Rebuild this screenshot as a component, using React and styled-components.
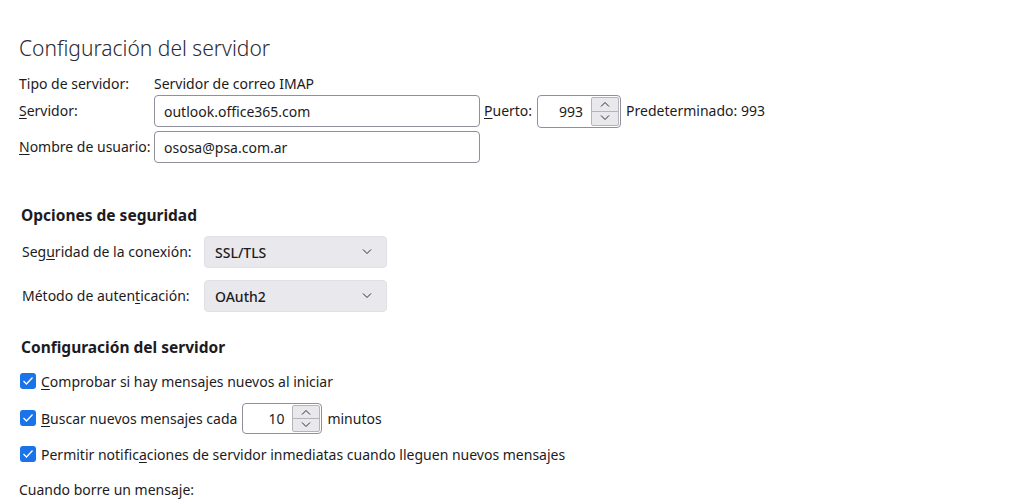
import React from 'react'
import styled, { createGlobalStyle } from 'styled-components'

const Global = createGlobalStyle`
  body {
    margin: 0;
    background: #ffffff;
    font-family: "Noto Sans", "Open Sans", sans-serif;
    font-size: 14px;
    color: #1c1b22;
  }
`

const Page = styled.div`
  padding: 33px 0 0 19px;
  width: 1016px;
  height: 467px;
  overflow: hidden;
`

const Title = styled.h1`
  margin: 0 0 14px;
  font-size: 21px;
  font-weight: 300;
  line-height: 30px;
  color: #2b2a33;
`

const ServerGrid = styled.div`
  display: grid;
  grid-template-columns: 131px 326px auto auto auto;
  grid-template-rows: 14px 32px 32px;
  column-gap: 4px;
  row-gap: 4px;
  align-items: center;
  justify-items: start;
  justify-content: start;
`

const Label = styled.span`
  white-space: nowrap;
  line-height: 20px;
  margin-left: ${p => p.$ml || 0}px;
`

const Value = styled.span`
  grid-column: 2 / span 4;
  line-height: 20px;
`

const Key = styled.u`
  text-decoration: underline;
  text-underline-offset: 2px;
`

const TextBox = styled.div`
  box-sizing: border-box;
  width: ${p => p.$w}px;
  height: 32px;
  border: 1px solid #8f8f9d;
  border-radius: 4px;
  padding: 0 9px;
  display: flex;
  align-items: center;
  background: #fff;
`

const Spinner = styled.div`
  box-sizing: border-box;
  width: ${p => p.$w}px;
  height: ${p => p.$h}px;
  margin-left: ${p => p.$ml || 0}px;
  border: 1px solid #8f8f9d;
  border-radius: 4px;
  display: flex;
  align-items: stretch;
  background: #fff;
  overflow: hidden;
`

const SpinValue = styled.span`
  flex: 1;
  text-align: right;
  padding-right: 8px;
  align-self: center;
`

const SpinButtons = styled.div`
  width: 26px;
  margin: 1px 1px 1px 0;
  display: flex;
  flex-direction: column;
  border: 1px solid #b4b4bb;
  border-radius: 2px;
  background: #e9e9ed;
`

const SpinButton = styled.div`
  flex: 1;
  display: flex;
  align-items: center;
  justify-content: center;
  & + & {
    border-top: 1px solid #b4b4bb;
  }
`

const Section = styled.section`
  padding-left: 2px;
  margin-top: ${p => p.$mt}px;
`

const Heading = styled.h2`
  margin: 0;
  font-size: 15.5px;
  font-weight: 700;
  line-height: 22px;
`

const SecurityGrid = styled.div`
  display: grid;
  grid-template-columns: 182px 183px;
  row-gap: 12px;
  align-items: center;
  margin: 10px 0 0 1px;
`

const Select = styled.div`
  box-sizing: border-box;
  height: 32px;
  border-radius: 4px;
  background: #e9e9ed;
  border: 1px solid #e0e0e6;
  display: flex;
  align-items: center;
  justify-content: space-between;
  padding: 0 14px 0 10px;
  font-weight: 500;
`

const CheckRow = styled.div`
  display: flex;
  align-items: center;
  gap: 5px;
  height: ${p => p.$h || 20}px;
  margin-top: ${p => p.$mt}px;
  white-space: nowrap;
`

const Box = styled.span`
  box-sizing: border-box;
  width: 16px;
  height: 16px;
  border-radius: 3px;
  background: #1a73e8;
  display: flex;
  align-items: center;
  justify-content: center;
  margin-left: -1px;
`

const Footer = styled.div`
  margin-top: 16px;
  line-height: 20px;
`

const Chevron = ({ up, size = 10 }) => (
  <svg width={size} height={size * 0.6} viewBox="0 0 10 6" fill="none">
    <path
      d={up ? 'M1 5.5 L5 1.5 L9 5.5' : 'M1 0.5 L5 4.5 L9 0.5'}
      stroke="#2b2a33"
      strokeWidth="1"
    />
  </svg>
)

const Check = () => (
  <svg width="12" height="10" viewBox="0 0 12 10" fill="none">
    <path d="M1.5 5 L4.5 8 L10.5 1.5" stroke="#fff" strokeWidth="1.3" />
  </svg>
)

function NumberField({ value, w, h, ml }) {
  return (
    <Spinner $w={w} $h={h} $ml={ml}>
      <SpinValue>{value}</SpinValue>
      <SpinButtons>
        <SpinButton><Chevron up /></SpinButton>
        <SpinButton><Chevron /></SpinButton>
      </SpinButtons>
    </Spinner>
  )
}

export default function App() {
  return (
    <>
      <Global />
      <Page>
        <Title>Configuración del servidor</Title>
        <ServerGrid>
          <Label>Tipo de servidor:</Label>
          <Value>Servidor de correo IMAP</Value>

          <Label><Key>S</Key>ervidor:</Label>
          <TextBox $w={326}>outlook.office365.com</TextBox>
          <Label><Key>P</Key>uerto:</Label>
          <NumberField value="993" w={84} h={33} ml={1} />
          <Label $ml={1}>Predeterminado: 993</Label>

          <Label><Key>N</Key>ombre de usuario:</Label>
          <TextBox $w={326}>ososa@psa.com.ar</TextBox>
        </ServerGrid>

        <Section $mt={41}>
          <Heading>Opciones de seguridad</Heading>
          <SecurityGrid>
            <Label>Seg<Key>u</Key>ridad de la conexión:</Label>
            <Select>SSL/TLS <Chevron /></Select>
            <Label>Método de auten<Key>t</Key>icación:</Label>
            <Select>OAuth2 <Chevron /></Select>
          </SecurityGrid>
        </Section>

        <Section $mt={24}>
          <Heading>Configuración del servidor</Heading>
          <CheckRow $mt={13}>
            <Box><Check /></Box>
            <span><Key>C</Key>omprobar si hay mensajes nuevos al iniciar</span>
          </CheckRow>
          <CheckRow $mt={12} $h={30}>
            <Box><Check /></Box>
            <span><Key>B</Key>uscar nuevos mensajes cada</span>
            <NumberField value="10" w={80} h={31} />
            <span>minutos</span>
          </CheckRow>
          <CheckRow $mt={11}>
            <Box><Check /></Box>
            <span>Permitir notific<Key>a</Key>ciones de servidor inmediatas cuando lleguen nuevos mensajes</span>
          </CheckRow>
        </Section>

        <Footer>Cuando borre un mensaje:</Footer>
      </Page>
    </>
  )
}
